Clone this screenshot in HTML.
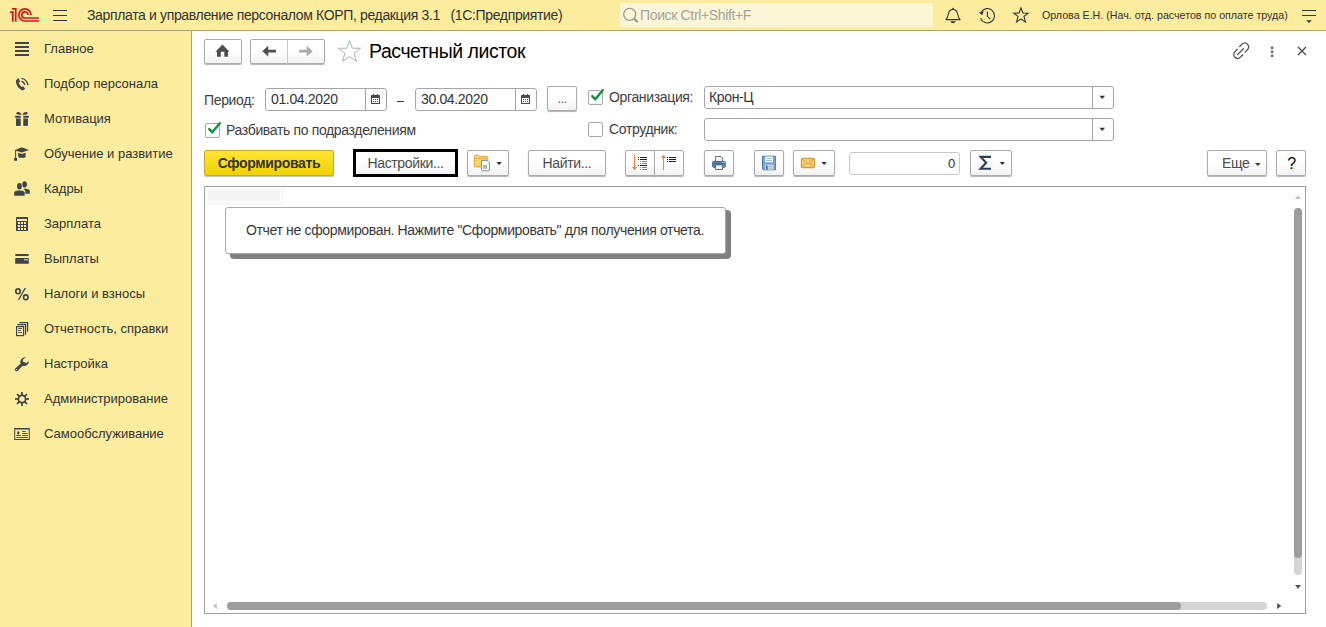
<!DOCTYPE html>
<html><head><meta charset="utf-8">
<style>
*{box-sizing:border-box;margin:0;padding:0}
html,body{width:1326px;height:627px;overflow:hidden;background:#fff;font-family:"Liberation Sans",sans-serif;color:#333}
div,span,svg{position:absolute}
#top{left:0;top:0;width:1326px;height:31px;background:#FBEC9E;border-bottom:1px solid #A9A06C}
#side{left:0;top:31px;width:192px;height:596px;background:#FBEC9E;border-right:1px solid #A9A06C}
.t{white-space:nowrap;font-size:14px;letter-spacing:-0.35px;line-height:16px}
.si{left:44px;color:#333;font-size:13px;letter-spacing:0}
.sic{left:10px;fill:#41434B}
.btn{height:26px;border:1px solid #ABABAB;border-radius:2px;background:linear-gradient(#fff 45%,#F2F2F2);box-shadow:0 1px 1px rgba(0,0,0,.3);font-size:14px;letter-spacing:-0.35px;color:#4D4D4D;text-align:center;line-height:24px;white-space:nowrap}
.inp{height:23px;border:1px solid #A5A5A5;border-radius:3px;background:#fff;font-size:14px;letter-spacing:-0.35px;color:#333;line-height:21px;padding-left:4px}
.lbl{color:#404040}
.cb{width:15px;height:15px;border:1px solid #A9A9A9;border-radius:2px;background:#fff}
.vd{width:1px;background:#A5A5A5}
</style></head><body>
<div id="top">
  <svg style="left:0;top:0" width="45" height="30" viewBox="0 0 45 30"><g fill="none" stroke="#D7141A" stroke-width="1.7"><path d="M10 12.05 H12.85 V21.8"/><path d="M12 8.85 H15.75 V21.8"/><path d="M31 14.9 A6.1 6.1 0 1 0 24.9 21 H39"/><path d="M28 14.9 A3.1 3.1 0 1 0 24.9 18 H39"/></g></svg>
  <div style="left:53px;top:10px;width:14px;height:1px;background:#333"></div>
  <div style="left:53px;top:15px;width:14px;height:1px;background:#333"></div>
  <div style="left:53px;top:20px;width:14px;height:1px;background:#333"></div>
  <span class="t" style="left:87px;top:7px;font-size:14px;color:#333">Зарплата и управление персоналом КОРП, редакция 3.1&nbsp;&nbsp; (1С:Предприятие)</span>
  <div style="left:620px;top:3px;width:313px;height:24px;background:#FDF6D6;border-radius:3px"></div>
  <svg style="left:620px;top:5px" width="22" height="20" viewBox="0 0 22 20"><circle cx="9.7" cy="9.3" r="6" fill="none" stroke="#8F8C80" stroke-width="1.1"/><path d="M14 13.6 L17.5 17" stroke="#8F8C80" stroke-width="2"/></svg>
  <span class="t" style="left:640px;top:7px;font-size:14px;color:#A3A3A3">Поиск Ctrl+Shift+F</span>
  <span class="t" style="left:1042px;top:7px;font-size:10.67px;letter-spacing:0;color:#333">Орлова Е.Н. (Нач. отд. расчетов по оплате труда)</span>
  <div style="left:1302px;top:10px;width:14px;height:1px;background:#333"></div>
  <div style="left:1302px;top:15px;width:14px;height:1px;background:#333"></div>
  <svg style="left:1305px;top:19px" width="9" height="6" viewBox="0 0 9 6"><path d="M1.2 1.2 H6.8 L4 4Z" fill="#333"/></svg>
</div>
<div id="side">
  <span class="t si" style="top:10px">Главное</span>
  <span class="t si" style="top:45px">Подбор персонала</span>
  <span class="t si" style="top:80px">Мотивация</span>
  <span class="t si" style="top:115px">Обучение и развитие</span>
  <span class="t si" style="top:150px">Кадры</span>
  <span class="t si" style="top:185px">Зарплата</span>
  <span class="t si" style="top:220px">Выплаты</span>
  <span class="t si" style="top:255px">Налоги и взносы</span>
  <span class="t si" style="top:290px">Отчетность, справки</span>
  <span class="t si" style="top:325px">Настройка</span>
  <span class="t si" style="top:360px">Администрирование</span>
  <span class="t si" style="top:395px">Самообслуживание</span>
</div>
<svg class="sic" style="top:38px" width="24" height="24" viewBox="0 0 24 24"><rect x="5" y="4" width="14" height="2"/><rect x="5" y="8" width="14" height="2"/><rect x="5" y="12" width="14" height="2"/><rect x="5" y="16" width="14" height="2"/></svg>
<svg class="sic" style="top:73px" width="24" height="24" viewBox="0 0 24 24"><path d="M6 7.2 C5.6 11.5 8.6 15.8 12.6 17.6 L15.2 15.9 L13.3 13.2 L11.9 14.1 C10.5 13.1 9.4 11.5 8.7 9.7 L10.1 8.5 L8.5 5 Z"/><path d="M11.4 5.4 A7 7 0 0 1 17.8 12.2" fill="none" stroke="#41434B" stroke-width="1.3"/><path d="M11.4 8.4 A4 4 0 0 1 14.6 12" fill="none" stroke="#41434B" stroke-width="1.3"/></svg>
<svg class="sic" style="top:108px" width="24" height="24" viewBox="0 0 24 24"><path d="M6.2 5.6 C6.5 3.5 9.5 3.3 11.7 6.4 C9 6.9 6.6 6.8 6.2 5.6Z"/><path d="M17.8 5.6 C17.5 3.5 14.5 3.3 12.3 6.4 C15 6.9 17.4 6.8 17.8 5.6Z"/><rect x="5.2" y="7.8" width="5.5" height="2"/><rect x="13.3" y="7.8" width="5.5" height="2"/><rect x="6" y="10.5" width="4.7" height="7.4"/><rect x="13.3" y="10.5" width="4.6" height="7.4"/></svg>
<svg class="sic" style="top:143px" width="24" height="24" viewBox="0 0 24 24"><path d="M4.5 7.2 L11.8 4.2 L19 7 L11.8 9.6 Z"/><path d="M8.2 9.8 L11.8 11.1 L15.6 9.8 V13.4 C15.6 14.6 13.8 14.8 11.9 14.8 C10 14.8 8.2 14.6 8.2 13.4Z"/><rect x="5.1" y="7.2" width="1" height="8"/><path d="M4.1 15 H7 V17.8 H4.1Z"/></svg>
<svg class="sic" style="top:178px" width="24" height="24" viewBox="0 0 24 24"><ellipse cx="9.4" cy="8.3" rx="2.4" ry="3.2"/><path d="M4.2 17.8 V14.6 C4.5 13.4 6.5 12.6 8 12.6 H10.8 C12.4 12.6 14.4 13.4 14.7 14.6 V17.8Z"/><ellipse cx="14.6" cy="6.4" rx="2.3" ry="3.1"/><path d="M15.4 15.7 V13.2 C15 12.3 14.2 11.6 13.4 11.2 C14 10.8 15 10.7 15.8 10.7 C17.6 10.7 19.4 11.6 19.8 12.6 V15.7Z"/></svg>
<svg class="sic" style="top:213px" width="24" height="24" viewBox="0 0 24 24"><path fill-rule="evenodd" d="M6.4 4 H17.6 Q18 4 18 4.4 V17.6 Q18 18 17.6 18 H6.4 Q6 18 6 17.6 V4.4 Q6 4 6.4 4Z M7 6 V8 H17 V6Z M7.9 8.9 V11 H10 V8.9Z M10.9 8.9 V11 H13 V8.9Z M14 8.9 V11 H16.1 V8.9Z M7.9 11.9 V14 H10 V11.9Z M10.9 11.9 V14 H13 V11.9Z M14 11.9 V14 H16.1 V11.9Z M7.9 15 V17 H10 V15Z M10.9 15 V17 H13 V15Z M14 15 V17 H16.1 V15Z"/></svg>
<svg class="sic" style="top:248px" width="24" height="24" viewBox="0 0 24 24"><rect x="5.2" y="6" width="13.6" height="1.9" rx="0.6"/><path fill-rule="evenodd" d="M5.8 10 H18.2 Q18.8 10 18.8 10.6 V15.2 Q18.8 15.8 18.2 15.8 H5.8 Q5.2 15.8 5.2 15.2 V10.6 Q5.2 10 5.8 10Z M14 11.2 V12.2 H18 V11.2Z"/></svg>
<svg class="sic" style="top:283px" width="24" height="24" viewBox="0 0 24 24"><ellipse cx="8" cy="8.3" rx="2.2" ry="2.4" fill="none" stroke="#41434B" stroke-width="1.6"/><ellipse cx="15.8" cy="14.3" rx="2.2" ry="2.4" fill="none" stroke="#41434B" stroke-width="1.6"/><path d="M14.6 5 H16 L9.3 16.7 H7.9Z"/></svg>
<svg class="sic" style="top:318px" width="24" height="24" viewBox="0 0 24 24"><g fill="none" stroke="#41434B" stroke-width="1.2"><rect x="6.6" y="8.6" width="7" height="9"/><path d="M7.4 6.6 H15.6 V16.8"/><path d="M9.4 4.6 H17.6 V13.8"/></g><rect x="8.2" y="10" width="3.8" height="0.9"/><rect x="8.2" y="12" width="2.8" height="0.9"/><rect x="8.2" y="14" width="3.8" height="0.9"/></svg>
<svg class="sic" style="top:353px" width="24" height="24" viewBox="0 0 24 24"><path fill-rule="evenodd" d="M15.7 4.2 C13.4 4 11.2 5.4 10.5 7.5 C10.2 8.6 10.3 9.6 10.7 10.6 L5.4 15.6 C4.7 16.3 4.8 17.4 5.5 17.9 C6.1 18.4 7.1 18.3 7.7 17.7 L12.6 12.7 C13.8 13.2 15 13.1 16.2 12.6 C17.9 11.8 18.9 10 18.7 8 L16.6 10.1 L13.4 9 L12.6 7 L15.7 4.2Z M6.5 16.6 m-0.6 0 a0.6 0.6 0 1 0 1.2 0 a0.6 0.6 0 1 0 -1.2 0Z"/></svg>
<svg class="sic" style="top:388px" width="24" height="24" viewBox="0 0 24 24"><circle cx="12" cy="11" r="3.6" fill="none" stroke="#41434B" stroke-width="1.7"/><g stroke="#41434B" stroke-width="1.7"><path d="M12 4 V7.4"/><path d="M12 14.6 V18"/><path d="M5 11 H8.4"/><path d="M15.6 11 H19"/><path d="M7 6 L9.4 8.4"/><path d="M14.6 13.6 L17 16"/><path d="M17 6 L14.6 8.4"/><path d="M9.4 13.6 L7 16"/></g></svg>
<svg class="sic" style="top:423px" width="24" height="24" viewBox="0 0 24 24"><path fill-rule="evenodd" d="M4.2 5.1 H19.8 V16.9 H4.2Z M5.2 6.6 V15.9 H18.8 V6.6Z"/><ellipse cx="8.3" cy="9.9" rx="1.2" ry="1.7"/><rect x="6.2" y="12" width="4.6" height="0.9"/><rect x="12.2" y="8" width="3.6" height="0.9"/><rect x="12.2" y="10" width="5.6" height="0.9"/><rect x="12.2" y="12" width="5.6" height="0.9"/><rect x="6.2" y="14" width="11.6" height="0.9"/></svg>

<svg style="left:940px;top:5px" width="24" height="22" viewBox="0 0 24 22"><path d="M6 14.6 C7.6 13.2 7.9 11.5 8.5 8.5 C9.1 5.6 10.9 4.5 13 4.5 C15.1 4.5 16.9 5.6 17.5 8.5 C18.1 11.5 18.4 13.2 20 14.6 Z" fill="none" stroke="#333" stroke-width="1.1" stroke-linejoin="round"/><circle cx="13" cy="3.7" r="0.9" fill="#333"/><path d="M10.4 16.3 H15.6 Q15 18.2 13 18.2 Q11 18.2 10.4 16.3Z" fill="#333"/></svg>
<svg style="left:976px;top:5px" width="22" height="22" viewBox="0 0 22 22"><path d="M5.2 7 A7.2 7.2 0 1 1 4.6 13.2" fill="none" stroke="#333" stroke-width="1.1"/><path d="M3 7.6 L7.8 6.2 L6.2 10.2Z" fill="#333"/><path d="M11.4 6.4 V11.3 L14.3 14.1" fill="none" stroke="#333" stroke-width="1.1"/></svg>
<svg style="left:1010px;top:5px" width="22" height="20" viewBox="0 0 22 20"><path d="M11 2.9 L12.9 8 L18.2 8.2 L14 11.4 L15.4 16.9 L11 13.8 L6.6 16.9 L8 11.4 L3.8 8.2 L9.1 8Z" fill="none" stroke="#333" stroke-width="1.1"/></svg>

<div class="btn" style="left:204px;top:39px;width:38px;height:25px"></div>
<svg style="left:214px;top:44px" width="17" height="14" viewBox="0 0 17 14"><path d="M8.5 0.6 L15.5 7.8 H14 V12.8 H10.3 V7.8 H6.8 V12.8 H3 V7.8 H1.4Z" fill="#4D4D4D"/></svg>
<div class="btn" style="left:250px;top:39px;width:75px;height:25px"></div>
<div style="left:287px;top:40px;width:1px;height:24px;background:#C9C9C9"></div>
<svg style="left:261px;top:45px" width="16" height="13" viewBox="0 0 16 13"><path d="M1.3 6.2 L7.3 0.8 V4.8 H14.9 V7.6 H7.3 V11.6Z" fill="#4D4D4D"/></svg>
<svg style="left:298px;top:45px" width="16" height="13" viewBox="0 0 16 13"><path d="M14.7 6.2 L8.7 0.8 V4.8 H1.1 V7.6 H8.7 V11.6Z" fill="#AAAAAA"/></svg>
<svg style="left:336px;top:39px" width="27" height="25" viewBox="0 0 27 25"><path d="M13.5 1.8 L16.3 9.2 L24.6 9.3 L18.1 14.3 L20.4 22.3 L13.5 17.6 L6.6 22.3 L8.9 14.3 L2.4 9.3 L10.7 9.2Z" fill="none" stroke="#A9B1BC" stroke-width="1"/></svg>
<span class="t" style="left:369px;top:40px;font-size:19.5px;letter-spacing:-0.45px;line-height:22px;color:#000">Расчетный листок</span>

<svg style="left:1231px;top:42px" width="20" height="19" viewBox="0 0 20 19"><g fill="none" stroke="#555" stroke-width="1.3" stroke-linecap="round"><path d="M6.3 7.3 L4 9.6 C2.3 11.3 2.3 13.6 3.9 15.2 C5.5 16.8 7.8 16.8 9.5 15.1 L11.8 12.8"/><path d="M8.6 4.6 L10.9 2.3 C12.6 0.6 14.9 0.6 16.5 2.2 C18.1 3.8 18.1 6.1 16.4 7.8 L14.1 10.1"/><path d="M6.6 12.6 L12.4 6.8"/></g></svg>
<svg style="left:1266px;top:42px" width="12" height="18" viewBox="0 0 12 18"><g fill="#707070"><circle cx="6.1" cy="5.8" r="1.5"/><circle cx="6.1" cy="9.8" r="1.5"/><circle cx="6.1" cy="13.8" r="1.5"/></g></svg>
<svg style="left:1294px;top:43px" width="16" height="16" viewBox="0 0 16 16"><path d="M4 4 L12 12 M12 4 L4 12" stroke="#444" stroke-width="1.2"/></svg>

<span class="t lbl" style="left:204px;top:92px">Период:</span>
<div class="inp" style="left:265px;top:88px;width:122px;padding-left:5px">01.04.2020</div>
<div class="vd" style="left:365px;top:89px;height:21px"></div>
<svg style="left:370px;top:93px" width="11" height="12" viewBox="0 0 11 12"><path fill-rule="evenodd" fill="#4A4A4A" d="M1.5 2 H3 V1 H4 V2 H7 V1 H8 V2 H9.5 Q10 2 10 2.5 V10.5 Q10 11 9.5 11 H1.5 Q1 11 1 10.5 V2.5 Q1 2 1.5 2Z M2 5 V10 H9 V5Z M3 6 H4 V7 H3Z M5 6 H6 V7 H5Z M7 6 H8 V7 H7Z M3 8 H4 V9 H3Z M5 8 H6 V9 H5Z M7 8 H8 V9 H7Z"/></svg>
<div style="left:397px;top:101px;width:7px;height:1px;background:#333"></div>
<div class="inp" style="left:415px;top:88px;width:122px;padding-left:5px">30.04.2020</div>
<div class="vd" style="left:515px;top:89px;height:21px"></div>
<svg style="left:520px;top:93px" width="11" height="12" viewBox="0 0 11 12"><path fill-rule="evenodd" fill="#4A4A4A" d="M1.5 2 H3 V1 H4 V2 H7 V1 H8 V2 H9.5 Q10 2 10 2.5 V10.5 Q10 11 9.5 11 H1.5 Q1 11 1 10.5 V2.5 Q1 2 1.5 2Z M2 5 V10 H9 V5Z M3 6 H4 V7 H3Z M5 6 H6 V7 H5Z M7 6 H8 V7 H7Z M3 8 H4 V9 H3Z M5 8 H6 V9 H5Z M7 8 H8 V9 H7Z"/></svg>
<div class="btn" style="left:547px;top:86px;width:30px;height:25px;line-height:24px;font-size:12px">...</div>
<div class="cb" style="left:588px;top:90px"></div>
<svg style="left:588px;top:85px" width="20" height="20" viewBox="0 0 20 20"><path d="M4.3 11.1 L7.3 14.3 L14.7 5.3" fill="none" stroke="#109445" stroke-width="2.5" stroke-linecap="round" stroke-linejoin="round"/></svg>
<span class="t lbl" style="left:609px;top:89px">Организация:</span>
<div class="inp" style="left:704px;top:86px;width:410px;padding-left:4px">Крон-Ц</div>
<div class="vd" style="left:1092px;top:87px;height:21px"></div>
<svg style="left:1099px;top:95px" width="7" height="5" viewBox="0 0 7 5"><path d="M0.5 0.8 H6 L3.25 4Z" fill="#333"/></svg>

<div class="cb" style="left:205px;top:123px"></div>
<svg style="left:205px;top:118px" width="20" height="20" viewBox="0 0 20 20"><path d="M4.3 11.1 L7.3 14.3 L14.7 5.3" fill="none" stroke="#109445" stroke-width="2.5" stroke-linecap="round" stroke-linejoin="round"/></svg>
<span class="t lbl" style="left:226px;top:122px">Разбивать по подразделениям</span>
<div class="cb" style="left:588px;top:122px"></div>
<span class="t lbl" style="left:609px;top:121px">Сотрудник:</span>
<div class="inp" style="left:704px;top:118px;width:410px"></div>
<div class="vd" style="left:1092px;top:119px;height:21px"></div>
<svg style="left:1099px;top:127px" width="7" height="5" viewBox="0 0 7 5"><path d="M0.5 0.8 H6 L3.25 4Z" fill="#333"/></svg>

<div class="btn" style="left:204px;top:150px;width:130px;background:linear-gradient(#FFE535,#F2D200);border-color:#C7AC1A;font-weight:bold;color:#333;box-shadow:0 1px 1px rgba(0,0,0,.25)">Сформировать</div>
<div class="btn" style="left:353px;top:149px;width:105px;height:28px;border:3px solid #000;border-radius:0;line-height:22px;box-shadow:none">Настройки...</div>
<div class="btn" style="left:467px;top:150px;width:42px"></div>
<svg style="left:473px;top:154px" width="18" height="18" viewBox="0 0 18 18"><path d="M1.3 3.2 Q1.3 1 3.2 1 H4.6 Q5.8 1 6.3 2.5 H13.6 Q14.7 2.5 14.7 3.7 V11.8 Q14.7 12.9 13.6 12.9 H2.4 Q1.3 12.9 1.3 11.8Z" fill="#F6D46E" stroke="#D9A53A" stroke-width="1"/><path d="M1.3 4.6 H14.7" stroke="#E0B048" stroke-width="1"/><path d="M8.6 6.4 H14 L16.4 8.8 V16.2 Q16.4 16.8 15.8 16.8 H9.2 Q8.6 16.8 8.6 16.2Z" fill="#fff" stroke="#7D8D99" stroke-width="1"/><rect x="10.6" y="11" width="1" height="3.4" fill="#E8302A"/><rect x="12.6" y="10.8" width="1" height="3.6" fill="#2DB04A"/><rect x="10" y="14.6" width="4.6" height="0.5" fill="#999"/></svg>
<svg style="left:496px;top:161px" width="7" height="5" viewBox="0 0 7 5"><path d="M0.4 1 H5.8 L3.1 4Z" fill="#333"/></svg>
<div class="btn" style="left:528px;top:150px;width:78px">Найти...</div>

<div class="btn" style="left:625px;top:150px;width:30px;border-radius:2px 0 0 2px"></div>
<div class="btn" style="left:654px;top:150px;width:30px;border-radius:0 2px 2px 0"></div>
<svg style="left:629px;top:153px" width="22" height="20" viewBox="0 0 22 20"><path d="M5.5 1.8 V15.5" stroke="#F08040" stroke-width="1.1"/><path d="M3 14 H8 L5.5 17.2Z" fill="#F08040"/><g fill="#222"><rect x="9" y="4" width="1" height="1"/><rect x="11" y="4" width="7" height="1"/><rect x="9" y="6" width="1" height="1"/><rect x="11" y="6" width="7" height="1"/><rect x="9" y="12" width="1" height="1"/><rect x="11" y="12" width="7" height="1"/></g><g fill="#888"><rect x="11" y="8" width="1" height="1"/><rect x="13" y="8" width="5" height="1"/><rect x="11" y="10" width="1" height="1"/><rect x="13" y="10" width="5" height="1"/><rect x="11" y="14" width="1" height="1"/><rect x="13" y="14" width="5" height="1"/><rect x="11" y="16" width="1" height="1"/><rect x="13" y="16" width="5" height="1"/></g></svg>
<svg style="left:658px;top:153px" width="22" height="20" viewBox="0 0 22 20"><path d="M5.5 4.5 V17.2" stroke="#F08040" stroke-width="1.1"/><path d="M3 5 H8 L5.5 1.8Z" fill="#F08040"/><g fill="#222"><rect x="9" y="4" width="1" height="1"/><rect x="11" y="4" width="7" height="1"/><rect x="9" y="6" width="1" height="1"/><rect x="11" y="6" width="7" height="1"/><rect x="9" y="8" width="1" height="1"/><rect x="11" y="8" width="7" height="1"/></g></svg>

<div class="btn" style="left:704px;top:150px;width:30px"></div>
<svg style="left:711px;top:155px" width="16" height="16" viewBox="0 0 16 16"><path d="M4.5 1.5 H10 L11.5 3 V6.5 H4.5Z" fill="#fff" stroke="#3F6A92" stroke-width="0.9"/><path d="M2.6 6.4 H13.4 Q14.4 6.4 14.4 7.4 V11.3 Q14.4 12.3 13.4 12.3 H2.6 Q1.6 12.3 1.6 11.3 V7.4 Q1.6 6.4 2.6 6.4Z" fill="#5F8AB5" stroke="#36618A" stroke-width="0.9"/><rect x="2.6" y="8" width="10.4" height="0.8" fill="#2C5378"/><rect x="11.2" y="7" width="1" height="0.8" fill="#fff"/><rect x="12.6" y="7" width="0.9" height="0.8" fill="#fff"/><path d="M4.5 10 H11.5 V14.5 H4.5Z" fill="#fff" stroke="#3F6A92" stroke-width="0.9"/></svg>
<div class="btn" style="left:754px;top:150px;width:30px"></div>
<svg style="left:761px;top:155px" width="16" height="16" viewBox="0 0 16 16"><path d="M1.5 1.2 H14.4 V14.8 H2.4 L1.5 13.9Z" fill="#7AA4D8" stroke="#3F6EA5" stroke-width="0.9"/><rect x="4" y="1.6" width="8" height="5.6" fill="#fff"/><rect x="5" y="3" width="6" height="0.7" fill="#7AA4D8"/><rect x="5" y="5" width="6" height="0.7" fill="#7AA4D8"/><rect x="3.8" y="9.6" width="8.8" height="5.2" fill="#C8CDCB"/><rect x="5" y="10.6" width="1.6" height="4.2" fill="#3F6EA5"/></svg>
<div class="btn" style="left:793px;top:150px;width:42px"></div>
<svg style="left:800px;top:157px" width="16" height="12" viewBox="0 0 16 12"><rect x="1.3" y="1.3" width="13.4" height="9.4" rx="1.4" fill="#F3CC73" stroke="#C98E26" stroke-width="1"/><path d="M1.8 1.8 L8 7 L14.2 1.8 M1.8 10.2 L6.3 5.8 M14.2 10.2 L9.7 5.8" fill="none" stroke="#CF9A3A" stroke-width="0.8"/></svg>
<svg style="left:821px;top:161px" width="7" height="5" viewBox="0 0 7 5"><path d="M0.4 1 H5.8 L3.1 4Z" fill="#333"/></svg>

<div class="inp" style="left:849px;top:152px;width:111px;height:23px;text-align:right;padding-right:4px;border-color:#C8C8C8;font-size:13px;line-height:21px">0</div>
<div class="btn" style="left:970px;top:150px;width:42px"></div>
<svg style="left:978px;top:154px" width="16" height="18" viewBox="0 0 16 18"><path d="M13 2.9 H2.6 L8.2 8.8 L2.6 14.8 H13" fill="none" stroke="#2B3F50" stroke-width="2.1" stroke-linejoin="miter"/></svg>
<svg style="left:999px;top:161px" width="7" height="5" viewBox="0 0 7 5"><path d="M0.6 1 H6 L3.3 4Z" fill="#333"/></svg>

<div class="btn" style="left:1207px;top:150px;width:60px;text-align:left;padding-left:14px">Еще</div>
<svg style="left:1254px;top:162px" width="8" height="5" viewBox="0 0 8 5"><path d="M1 1 H6.6 L3.8 4Z" fill="#333"/></svg>
<div class="btn" style="left:1276px;top:150px;width:30px;color:#000;font-size:16px;line-height:26px;padding-left:1px">?</div>

<div style="left:204px;top:186px;width:1102px;height:428px;border:1px solid #A0A0A0;background:#fff"></div>
<div style="left:206px;top:188px;width:78px;height:17px;background:#F8F8F8"></div>
<div style="left:207px;top:189px;width:74px;height:13px;background:#F5F5F5;border:1px solid #fff"></div>
<div style="left:230px;top:210px;width:501px;height:49px;background:#808080;border-radius:4px"></div>
<div style="left:225px;top:207px;width:501px;height:47px;border:1px solid #A8A8A8;border-radius:3px;background:#fff"></div>
<span class="t" style="left:246px;top:222px;color:#383838">Отчет не сформирован. Нажмите "Сформировать" для получения отчета.</span>
<!-- vertical scrollbar -->
<svg style="left:1294px;top:194px" width="8" height="6" viewBox="0 0 8 6"><path d="M1 5 H7 L4 1.2Z" fill="#C4C4C4"/></svg>
<div style="left:1294px;top:208px;width:8px;height:367px;background:#D5D5D5;border-radius:4px"></div>
<div style="left:1294px;top:208px;width:8px;height:350px;background:#9D9D9D;border-radius:4px"></div>
<svg style="left:1294px;top:584px" width="8" height="6" viewBox="0 0 8 6"><path d="M1 1 H7 L4 4.8Z" fill="#505050"/></svg>
<!-- horizontal scrollbar -->
<svg style="left:211px;top:602px" width="7" height="8" viewBox="0 0 7 8"><path d="M5.8 1 V7 L1.8 4Z" fill="#C4C4C4"/></svg>
<div style="left:227px;top:602px;width:1040px;height:8px;background:#D5D5D5;border-radius:4px"></div>
<div style="left:227px;top:602px;width:954px;height:8px;background:#9D9D9D;border-radius:4px"></div>
<svg style="left:1276px;top:602px" width="7" height="8" viewBox="0 0 7 8"><path d="M1.2 1 V7 L5.2 4Z" fill="#505050"/></svg>

</body></html>
